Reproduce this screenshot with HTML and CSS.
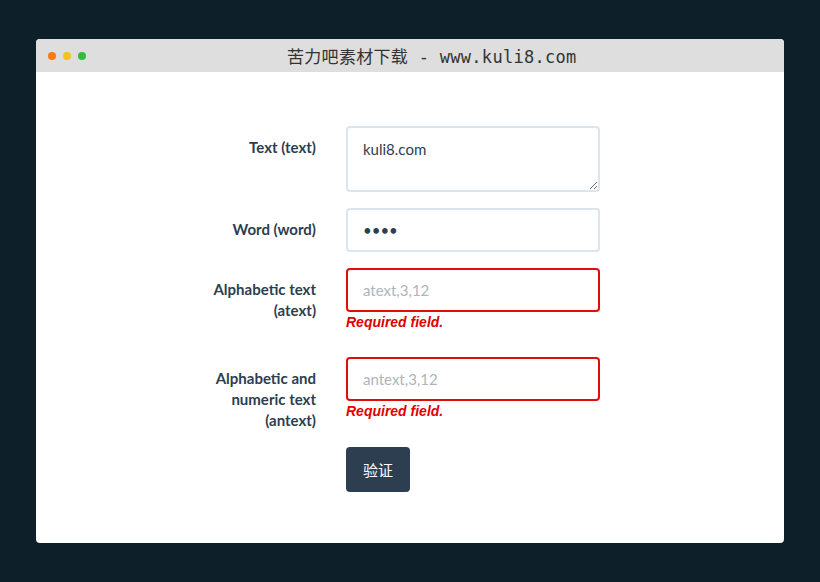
FILE: index.html
```html
<!DOCTYPE html>
<html lang="zh">
<head>
<meta charset="utf-8">
<title>苦力吧素材下载</title>
<link rel="stylesheet" href="styles.css">
</head>
<body>
<div class="window">
  <div class="titlebar">
    <div class="dots">
      <span class="dot orange"></span>
      <span class="dot yellow"></span>
      <span class="dot green"></span>
    </div>
    <div class="title">苦力吧素材下载 - www.kuli8.com</div>
  </div>
  <div class="content">
    <form class="form">
      <label class="label">Text (text)</label>
      <div class="field"><textarea class="control area">kuli8.com</textarea></div>

      <label class="label">Word (word)</label>
      <div class="field"><input class="control" type="password" value="kuli"></div>

      <label class="label">Alphabetic text (atext)</label>
      <div class="field">
        <input class="control invalid" type="text" placeholder="atext,3,12">
        <span class="error">Required field.</span>
      </div>

      <label class="label">Alphabetic and numeric text (antext)</label>
      <div class="field">
        <input class="control invalid" type="text" placeholder="antext,3,12">
        <span class="error">Required field.</span>
      </div>

      <span></span>
      <div class="field"><button type="button" class="btn">验证</button></div>
    </form>
  </div>
</div>
</body>
</html>
```
FILE: styles.css
```css
html, body {
  margin: 0;
  padding: 0;
  background: #0d1f28;
  height: 100%;
}
body {
  padding: 39px 36px;
  box-sizing: border-box;
  font-family: Lato, "Noto Sans", sans-serif;
}
.window {
  height: 504px;
  background: #fff;
  border-radius: 4px;
  overflow: hidden;
  display: flex;
  flex-direction: column;
}
.titlebar {
  height: 33px;
  background: #dedede;
  display: flex;
  align-items: center;
}
.dots {
  display: flex;
  gap: 7px;
  padding-left: 12px;
}
.dot {
  width: 8px;
  height: 8px;
  border-radius: 50%;
  display: block;
}
.orange { background: #f77b0e; }
.yellow { background: #f1c419; }
.green { background: #30bd3c; }
.title {
  margin-left: 201px;
  font-family: "DejaVu Sans Mono", "Noto Sans CJK SC", monospace;
  font-size: 17px;
  letter-spacing: 0.3px;
  color: #333;
  white-space: nowrap;
}
.content {
  flex: 1;
  padding-top: 54px;
  padding-left: 160px;
}
.form {
  display: grid;
  grid-template-columns: 120px 254px;
  column-gap: 30px;
  row-gap: 16px;
  align-items: start;
}
.label {
  text-align: right;
  font-weight: 700;
  font-size: 15px;
  line-height: 21px;
  padding-top: 11px;
  color: #2c3e50;
}
.field {
  display: flex;
  flex-direction: column;
}
.control {
  box-sizing: border-box;
  width: 254px;
  height: 44px;
  border: 2px solid #dce4ec;
  border-radius: 4px;
  padding: 10px 15px;
  font-family: Lato, "Noto Sans", sans-serif;
  font-size: 15px;
  color: #2c3e50;
  background: #fff;
  margin: 0;
  outline: none;
}
.control::placeholder {
  color: #acb6c0;
}
.area {
  height: 66px;
  line-height: 20px;
  padding-top: 11px;
  resize: vertical;
}
input[type="password"] {
  font-size: 15px;
  letter-spacing: 0;
}
.invalid {
  border-color: #e00d0d;
}
.error {
  display: block;
  margin-top: 1px;
  margin-bottom: 10px;
  line-height: 18px;
  font-family: "Liberation Sans", Arial, sans-serif;
  font-style: italic;
  font-weight: 700;
  font-size: 14px;
  color: #e00000;
}
.btn {
  align-self: flex-start;
  width: 64px;
  height: 45px;
  border: none;
  border-radius: 4px;
  background: #2c3e50;
  color: #fff;
  font-family: "Noto Sans CJK SC", sans-serif;
  font-size: 15px;
  padding: 0;
}
```
